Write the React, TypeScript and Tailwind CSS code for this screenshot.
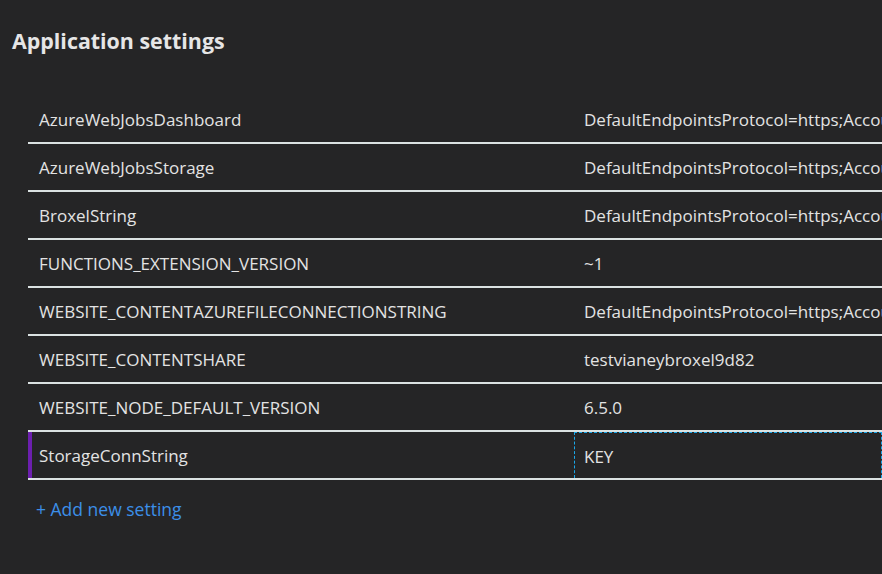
import React from "react";

const rows: [string, string][] = [
  ["AzureWebJobsDashboard", "DefaultEndpointsProtocol=https;AccountName=testvianeybroxel9d82;AccountKey=xxxxxxxx"],
  ["AzureWebJobsStorage", "DefaultEndpointsProtocol=https;AccountName=testvianeybroxel9d82;AccountKey=xxxxxxxx"],
  ["BroxelString", "DefaultEndpointsProtocol=https;AccountName=broxel;AccountKey=xxxxxxxx"],
  ["FUNCTIONS_EXTENSION_VERSION", "~1"],
  ["WEBSITE_CONTENTAZUREFILECONNECTIONSTRING", "DefaultEndpointsProtocol=https;AccountName=testvianeybroxel9d82;AccountKey=xxxxxxxx"],
  ["WEBSITE_CONTENTSHARE", "testvianeybroxel9d82"],
  ["WEBSITE_NODE_DEFAULT_VERSION", "6.5.0"],
];

export default function App() {
  const font = { fontFamily: '"Open Sans", "Noto Sans", "Liberation Sans", sans-serif' };
  return (
    <div className="w-[882px] h-[574px] bg-[#252526] overflow-hidden text-[#e3e3e3]" style={font}>
      <div className="pl-[12px] pt-[26px] h-[96px]">
        <h1 className="text-[21.4px] font-bold leading-[30px] text-[#e6e6e6]">Application settings</h1>
      </div>
      <div className="ml-[28px]">
        {rows.map(([k, v]) => (
          <div key={k} className="flex h-[48px] pt-[2px] border-b-2 border-[#dbe2e2] whitespace-nowrap overflow-hidden">
            <div className="w-[546px] shrink-0 pl-[11px] flex items-center text-[17px]">{k}</div>
            <div className="flex-1 pl-[10px] flex items-center text-[17px] overflow-hidden">{v}</div>
          </div>
        ))}
        <div className="flex h-[48px] whitespace-nowrap border-b-2 border-[#dbe2e2]">
          <div className="w-[4px] bg-[#6c1fae] shrink-0" />
          <div className="w-[542px] shrink-0 pl-[7px] pt-[2px] flex items-center text-[17px]">StorageConnString</div>
          <div className="flex-1 pl-[9px] pt-[2px] flex items-center text-[17px] border border-b-0 border-dashed border-[#1aa7e8]">KEY</div>
        </div>
        <div className="pl-[8px] pt-[16px] text-[17.5px] text-[#3c8fe8]">+ Add new setting</div>
      </div>
    </div>
  );
}
